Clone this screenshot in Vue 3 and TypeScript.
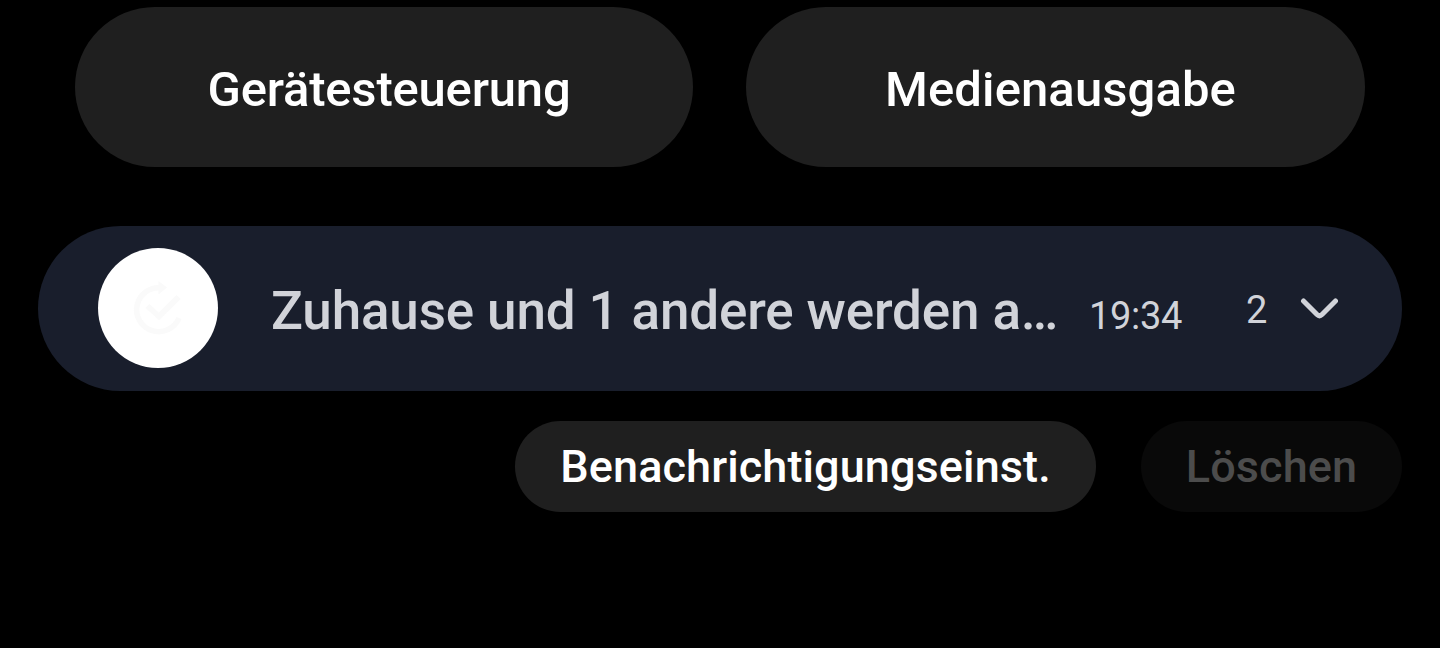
<template>
  <main class="panel">
    <div class="quick-row">
      <button
        v-for="action in quickActions"
        :key="action.id"
        class="quick-btn"
        :class="`quick-btn--${action.id}`"
        type="button"
      >
        <span>{{ action.label }}</span>
      </button>
    </div>

    <section class="notification">
      <span class="app-icon">
        <svg viewBox="0 0 60 60" aria-hidden="true">
          <path d="M33 9.8A22 22 0 1 0 51 40" />
          <path d="M19.5 28l11.5 10.500l19.500-19.500" />
          <path class="app-icon-arrow" d="M30.500 3l8.500 6.500-8.500 7z" />
        </svg>
      </span>
      <span class="title">Zuhause und 1 andere werden a…</span>
      <time class="time">19:34</time>
      <span class="count">2</span>
      <svg class="chevron" viewBox="0 0 38 22" aria-hidden="true">
        <path d="M3.5 3l13.500 13.500q2.500 2.500 5 0L35.500 3" />
      </svg>
    </section>

    <footer class="footer">
      <button class="footer-btn" type="button"><span>Benachrichtigungseinst.</span></button>
      <button class="footer-btn footer-btn--disabled" type="button" disabled><span>Löschen</span></button>
    </footer>
  </main>
</template>

<script setup lang="ts">
interface QuickAction {
  id: 'devices' | 'media'
  label: string
}

const quickActions: QuickAction[] = [
  { id: 'devices', label: 'Gerätesteuerung' },
  { id: 'media', label: 'Medienausgabe' },
]
</script>

<style>
body {
  background: #000000;
}
</style>

<style scoped>
.panel {
  width: 1440px;
  height: 648px;
  padding: 7px 38px 0;
  box-sizing: border-box;
  overflow: hidden;
  background: #000000;
  font-family: Roboto, sans-serif;
}

button {
  border: none;
  padding: 0;
  font-family: inherit;
  font-weight: 500;
  color: #ffffff;
  background: #1f1f1f;
  white-space: nowrap;
}

.quick-row {
  display: grid;
  grid-template-columns: 618px 619px;
  gap: 53px;
  padding-left: 37px;
}

.quick-btn {
  height: 160px;
  padding: 4px 0 0 10px;
  border-radius: 80px;
  font-size: 49px;
}

.quick-btn--devices {
  letter-spacing: -0.2px;
}

.quick-btn--media {
  letter-spacing: 0.1px;
}

.notification {
  display: flex;
  align-items: center;
  height: 165px;
  margin-top: 59px;
  padding: 0 64px 0 60px;
  box-sizing: border-box;
  border-radius: 83px;
  background: #191e2c;
  color: #d1d3d9;
  white-space: nowrap;
}

.app-icon {
  flex: none;
  display: flex;
  align-items: center;
  justify-content: center;
  width: 120px;
  height: 120px;
  margin: 0 53px 1px 0;
  border-radius: 50%;
  background: #ffffff;
}

.app-icon svg {
  width: 60px;
  height: 60px;
  fill: none;
  stroke: #fafafa;
  stroke-width: 5.5;
}

.app-icon .app-icon-arrow {
  fill: #fafafa;
  stroke: none;
}

.title {
  width: 788px;
  padding-top: 4px;
  font-size: 53px;
  font-weight: 500;
  letter-spacing: -0.15px;
}

.time {
  width: 126px;
  margin-left: 30px;
  padding-top: 15px;
  font-size: 38px;
  letter-spacing: -0.3px;
}

.count {
  width: 22px;
  margin-left: 31px;
  padding-top: 3px;
  font-size: 38px;
}

.chevron {
  flex: none;
  width: 38px;
  height: 22px;
  margin-left: auto;
  fill: none;
  stroke: #d1d3d9;
  stroke-width: 5;
  stroke-linecap: round;
}

.footer {
  display: flex;
  justify-content: flex-end;
  gap: 45px;
  margin-top: 30px;
}

.footer-btn {
  width: 581px;
  height: 91px;
  border-radius: 46px;
  font-size: 45px;
  letter-spacing: 0.1px;
}

.footer-btn--disabled {
  width: 261px;
  color: #4c4c4c;
  background: #090909;
}
</style>
